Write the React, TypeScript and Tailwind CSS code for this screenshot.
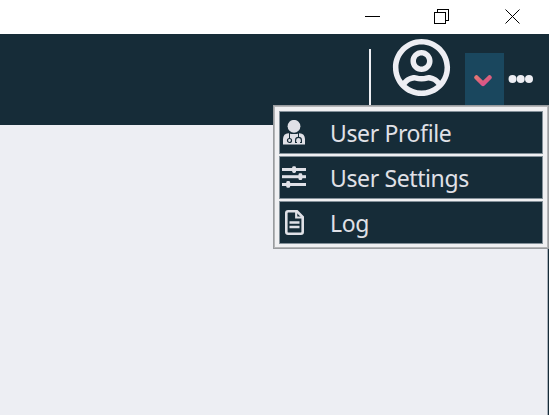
import { FaRegUserCircle } from "react-icons/fa";
import type { ReactNode } from "react";

function DoctorIcon() {
  return (
    <svg width="24" height="25" viewBox="0 0 24 25">
      <circle cx="12" cy="6.300" r="6.400" fill="currentColor" />
      <path d="M1 24.500V19Q1.200 13.500 6.500 13.200Q12 15 17.500 13.200Q22.800 13.500 23 19V24.500Z" fill="currentColor" />
      <g fill="none" stroke="#162c38" strokeWidth="1">
        <path d="M7.500 13V18.500M16.500 13V17" />
        <circle cx="7.500" cy="20.500" r="2" strokeWidth="1.200" />
        <path d="M15 22.500H13.600V20Q13.700 17.300 16.500 17.300Q19.300 17.300 19.400 20V22.500H18" strokeWidth="1.200" />
      </g>
    </svg>
  );
}

function SlidersIcon() {
  return (
    <svg className="mb-[2px]" width="24" height="22" viewBox="0 0 24 22" fill="currentColor">
      <rect x="0" y="2" width="24" height="3" />
      <rect x="0" y="9.200" width="24" height="3" />
      <rect x="0" y="17" width="24" height="3" />
      <rect x="10.200" y="0.200" width="3.800" height="6.800" rx="1.400" />
      <rect x="16.500" y="7.300" width="3.800" height="6.800" rx="1.400" />
      <rect x="4.300" y="15" width="3.800" height="6.800" rx="1.400" />
    </svg>
  );
}

function DocumentIcon() {
  return (
    <svg className="mb-px ml-[3px]" width="19" height="25" viewBox="0 0 19 25" fill="none" stroke="currentColor">
      <path d="M3 1.300H12L17.700 7V22Q17.700 23.700 16 23.700H3Q1.300 23.700 1.300 22V3Q1.300 1.300 3 1.300Z" strokeWidth="2.600" />
      <path d="M11.200 1.500V7.500H17.500" strokeWidth="2.200" />
      <path d="M4.500 12.500H14.500M4.500 17H14.500" strokeWidth="2.300" />
    </svg>
  );
}

function MenuItem({ icon, label }: { icon: ReactNode; label: string }) {
  return (
    <div className="flex h-[43px] shrink-0 items-center border border-[#84919a] bg-[#162c38] text-[#e0e1e7]">
      <div className="flex w-[50px] pl-0.5">{icon}</div>
      <span className="pt-px text-[23px] leading-[30px] tracking-[-0.38px] whitespace-nowrap">{label}</span>
    </div>
  );
}

export default function App() {
  return (
    <div className="relative flex h-[415px] w-[549px] flex-col overflow-hidden bg-[#edeef3] font-['Noto_Sans',sans-serif]">
      <div className="flex h-[34px] shrink-0 justify-end bg-white">
        <svg width="200" height="34" fill="none" stroke="#000" shapeRendering="crispEdges">
          <path d="M16 16.500h15M85.500 12.500h11v11h-11zM88.500 12V9.500h11v11H97" />
          <path d="M156.500 9.500l14 14M170.500 9.500l-14 14" shapeRendering="auto" />
        </svg>
      </div>
      <div className="flex h-[91px] shrink-0 bg-[#162c38] pl-[369px]">
        <div className="mt-[15px] w-[2px] bg-[#edeef3]" />
        <FaRegUserCircle className="mt-[4px] ml-[21px] size-[59px] text-[#edeef3]" />
        <div className="mt-[19px] ml-[14px] flex w-[39px] bg-[#1a475e] pt-[21px] pl-[9px]">
          <svg width="18" height="13" fill="none">
            <defs>
              <linearGradient id="chevron" x1="0" y1="0" x2="1" y2="1">
                <stop stopColor="#e27474" />
                <stop offset="0.600" stopColor="#db5a80" />
                <stop offset="1" stopColor="#d95294" />
              </linearGradient>
            </defs>
            <path d="M2.500 3.500L9 9.800L15.500 3.500" stroke="url(#chevron)" strokeWidth="4.500" strokeLinejoin="round" strokeLinecap="round" />
          </svg>
        </div>
        <svg className="mt-[40px] ml-[4px]" width="26" height="10" fill="#edeef3">
          <circle cx="4.500" cy="5" r="4" />
          <circle cx="12.700" cy="5" r="4" />
          <circle cx="21" cy="5" r="4" />
        </svg>
      </div>
      <div className="flex flex-1 justify-end">
        <div className="w-[2px] border-l border-[#a8b0ba] bg-[#162c38]" />
      </div>
      <div className="absolute top-[105px] left-[273px] h-[144px] w-[276px] border border-[#999c9f]">
        <div className="flex h-full flex-col gap-[2px] border border-[#b4b5b7] bg-[#f0f0f2] px-1 pt-1 pb-[3px]">
          <MenuItem icon={<DoctorIcon />} label="User Profile" />
          <MenuItem icon={<SlidersIcon />} label="User Settings" />
          <MenuItem icon={<DocumentIcon />} label="Log" />
        </div>
      </div>
    </div>
  );
}
